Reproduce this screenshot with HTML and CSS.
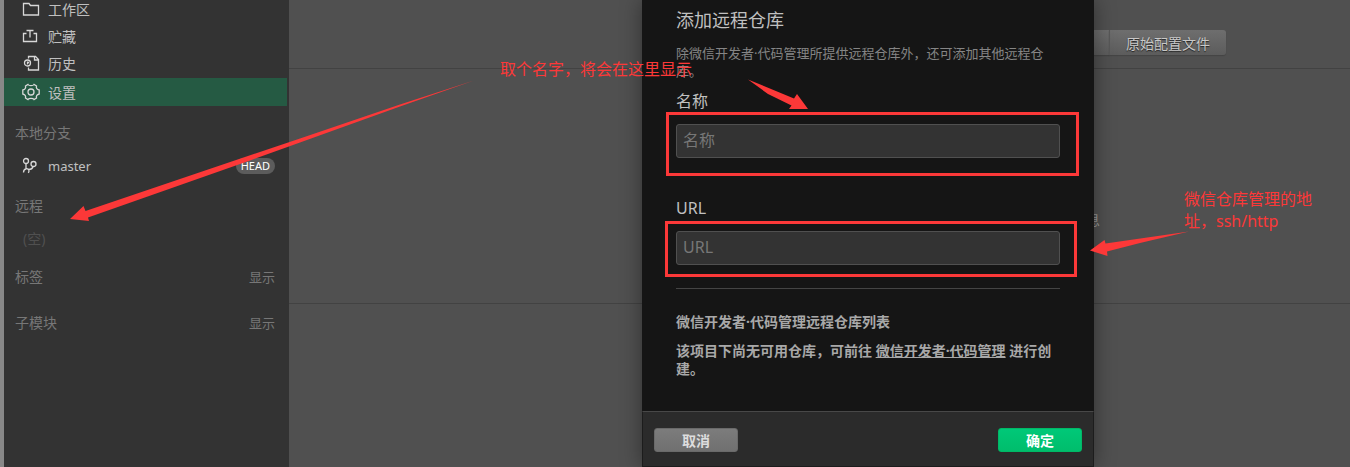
FILE: index.html
```html
<!DOCTYPE html>
<html lang="zh-CN">
<head>
    <meta charset="UTF-8">
    <meta name="viewport" content="width=device-width, initial-scale=1.0">
    <title>添加远程仓库</title>
    <link rel="stylesheet" href="styles.css">
</head>
<body>
    <div class="app">
        <aside class="sidebar">
            <nav class="menu">
                <a class="menu-item" href="#workspace">
                    <svg class="icon" viewBox="0 0 18 18"><path d="M1.500 3.500h5.500l1.500 2h8v9.500h-15z"/></svg>
                    工作区
                </a>
                <a class="menu-item" href="#stash">
                    <svg class="icon" viewBox="0 0 18 18"><path d="M4.500 6.500h-3v8h13v-8h-3M8 10.500V3.500M4.500 3.500h7"/></svg>
                    贮藏
                </a>
                <a class="menu-item" href="#history">
                    <svg class="icon" viewBox="0 0 18 18"><path d="M6.500 4.500v-2h7l3 3v10.500h-10v-2.500M12.500 2.500v3.500h4"/><circle cx="5.500" cy="9" r="3"/><path d="M5.500 7.500v2l1.500-1.500"/></svg>
                    历史
                </a>
                <a class="menu-item selected" href="#settings">
                    <svg class="icon" viewBox="0 0 18 18"><path d="M6 1.500c1 1.500 5 1.500 6 0l2.500 1.500c-.6 2 .6 3.500 2.700 4v4c-2.100.5-3.300 2-2.700 4L12 16.500c-1-1.500-5-1.500-6 0L3.500 15c.6-2-.6-3.500-2.700-4V7c2.100-.5 3.300-2 2.700-4z"/><circle cx="9" cy="9" r="3"/></svg>
                    设置
                </a>
            </nav>

            <section class="group">
                <h2 class="group-title">本地分支</h2>
                <a class="branch" href="#master">
                    <svg class="icon" viewBox="0 0 18 18"><circle cx="4" cy="4" r="2.500"/><circle cx="11.500" cy="7" r="2.500"/><path d="M4 6.500v5M11 9.500c-.5 2.500-2 3-4.500 3M1.500 15.500c0-4.500 5.500-5 5.500-1.500 0 1-.5 1.500-1 1.700"/></svg>
                    <span class="branch-name">master</span>
                    <span class="badge">HEAD</span>
                </a>
            </section>

            <section class="group">
                <h2 class="group-title">远程</h2>
                <p class="empty">(空)</p>
            </section>

            <section class="group folded">
                <h2 class="group-title">标签</h2>
                <button class="show" type="button">显示</button>
            </section>

            <section class="group folded">
                <h2 class="group-title">子模块</h2>
                <button class="show" type="button">显示</button>
            </section>
        </aside>

        <main class="main">
            <header class="toolbar">
                <button class="tab" type="button">当前设置</button>
                <button class="tab" type="button">原始配置文件</button>
            </header>
            <div class="panel">
                <p>无远程仓库信息</p>
            </div>
        </main>
    </div>

    <form class="dialog">
        <div class="dialog-body">
            <h1>添加远程仓库</h1>
            <p class="desc">除微信开发者·代码管理所提供远程仓库外，还可添加其他远程仓<br>库。</p>
            <div class="field">
                <label for="name">名称</label>
                <input id="name" type="text" placeholder="名称">
            </div>
            <div class="field">
                <label for="url">URL</label>
                <input id="url" type="text" placeholder="URL">
            </div>
            <div class="repos">
                <h3>微信开发者·代码管理远程仓库列表</h3>
                <p>该项目下尚无可用仓库，可前往 <a href="#code">微信开发者·代码管理</a> 进行创建。</p>
            </div>
        </div>
        <footer class="dialog-footer">
            <button class="btn" type="button">取消</button>
            <button class="btn primary" type="submit">确定</button>
        </footer>
    </form>

    <!-- red notes over the page -->
    <svg class="marks" width="1350" height="467" viewBox="0 0 1350 467">
        <rect x="667.500" y="113.500" width="410" height="61"/>
        <rect x="666.500" y="222.500" width="409" height="53"/>
        <path d="M474 80.500L400 104.500L300 138.500L85.500 211L83.500 206L70 219L89 221L88 217.500L250 160.500L300 142.500L400 106.500z"/>
        <path d="M748 79.500L794 98.500L797 94L808 109H789L791.500 105.500L768 94z"/>
        <path d="M1189 231.500L1105.500 243.500L1104.500 240L1090 250.500L1107.500 256L1107 251.500L1140 243z"/>
    </svg>
    <p class="note note-name">取个名字，将会在这里显示</p>
    <p class="note note-url">微信仓库管理的地址，ssh/http</p>
</body>
</html>
```
FILE: styles.css
```css
* {
    box-sizing: border-box;
}

body, html {
    margin: 0;
    height: 100%;
    overflow: hidden;
}

body {
    position: relative;
    background-color: #505050;
    color: #c0c0c0;
    font-family: "Noto Sans", "Noto Sans CJK SC", sans-serif;
    font-size: 14px;
}

h1, h2, h3, p {
    margin: 0;
    font-weight: normal;
}

a {
    color: inherit;
    text-decoration: none;
}

button, input {
    font-family: inherit;
}

.app {
    display: flex;
    height: 100%;
}

/* sidebar */
.sidebar {
    display: flex;
    flex-direction: column;
    flex: 0 0 289px;
    background-color: #333;
    border-left: 4px solid #888;
}

.menu {
    margin-top: -3px;
}

.menu-item {
    display: flex;
    align-items: center;
    gap: 8px;
    height: 27px;
    margin-right: 2px;
    padding: 0 0 4px 18px;
}

.menu-item.selected {
    height: 28px;
    padding-bottom: 0;
    background-color: #255a43;
}

.icon {
    flex: none;
    width: 18px;
    height: 18px;
    fill: none;
    stroke: #d8d8d8;
    stroke-width: 1.3;
}

.group {
    display: flex;
    flex-wrap: wrap;
    align-items: center;
    justify-content: space-between;
    gap: 5px;
    margin-top: 13px;
    padding: 0 14px 0 11px;
    line-height: 28px;
}

.group + .group {
    margin-top: 12px;
}

.group + .folded {
    margin-top: 10px;
}

.folded + .folded {
    margin-top: 18px;
}

.group-title {
    font-size: 14px;
    color: #777;
}

.branch {
    display: flex;
    align-items: center;
    flex: 1 0 100%;
    gap: 8px;
    padding-left: 7px;
}

.branch-name {
    flex: 1;
    font-size: 13px;
}

.badge {
    padding: 0 5px;
    border-radius: 8px;
    background-color: #5c5c5c;
    color: #fff;
    font-size: 11px;
    line-height: 16px;
}

.empty {
    flex: 1 0 100%;
    padding-left: 8px;
    color: #505050;
}

.show {
    padding: 0;
    border: none;
    background: none;
    color: #777;
    font-size: 13px;
    line-height: 26px;
}

/* settings page */
.main {
    flex: 1;
}

.toolbar {
    display: flex;
    justify-content: flex-end;
    height: 69px;
    padding: 30px 124px 0 0;
    border-bottom: 1px solid #424242;
}

.tab {
    height: 25px;
    padding: 0 16px;
    border: none;
    border-left: 1px solid #585858;
    background: linear-gradient(#6e6e6e, #5c5c5c);
    box-shadow: 0 1px 1px #444;
    color: #c8c8c8;
    font-size: 14px;
    text-shadow: 0 1px 1px #222;
}

.tab:last-child {
    border-radius: 0 3px 3px 0;
}

.panel {
    display: flex;
    align-items: center;
    justify-content: flex-end;
    height: 235px;
    padding: 66px 250px 0 0;
    border-bottom: 1px solid #424242;
    color: #999;
}

/* dialog */
.dialog {
    position: absolute;
    top: 0;
    bottom: 0;
    left: 642px;
    display: flex;
    flex-direction: column;
    width: 452px;
    background-color: #151515;
    box-shadow: 0 0 20px rgba(0, 0, 0, 0.4);
}

.dialog-body {
    flex: 1;
    padding: 8px 34px 0;
}

.dialog h1 {
    font-size: 18px;
    line-height: 24px;
}

.desc {
    margin-top: 12px;
    color: #858585;
    font-size: 13px;
    line-height: 18px;
}

.field {
    margin-top: 7px;
}

.field + .field {
    margin-top: 36px;
}

.field label {
    display: block;
    margin-bottom: 9px;
    font-size: 16px;
    line-height: 28px;
}

.field input {
    display: block;
    width: 100%;
    height: 34px;
    padding: 0 6px 2px;
    border: 1px solid #505050;
    border-radius: 3px;
    background-color: #333;
    color: #c8c8c8;
    font-size: 16px;
}

.field input::placeholder {
    color: #777;
}

.repos {
    margin-top: 23px;
    padding-top: 24px;
    border-top: 1px solid #444;
    color: #a8a8a8;
    line-height: 18px;
}

.repos h3 {
    margin-bottom: 11px;
    font-size: 14px;
    font-weight: bold;
}

.repos p {
    font-weight: bold;
}

.repos a {
    text-decoration: underline;
}

.dialog-footer {
    display: flex;
    justify-content: space-between;
    height: 56px;
    padding: 16px 11px;
    border: 1px solid #1c1c1c;
    border-top-color: #484848;
    background-color: #2b2b2b;
}

.btn {
    width: 84px;
    height: 24px;
    padding: 0;
    border: 1px solid #6a6a6a;
    border-radius: 3px;
    background: linear-gradient(#7c7c7c, #707070);
    color: #ddd;
    font-size: 14px;
    font-weight: bold;
}

.btn.primary {
    border-color: #00b866;
    background: linear-gradient(#00c878, #00bd6c);
    color: #fff;
}

/* notes */
.marks {
    position: absolute;
    top: 0;
    left: 0;
    pointer-events: none;
}

.marks rect {
    fill: none;
    stroke: #fc3838;
    stroke-width: 3;
}

.marks path {
    fill: #fc3838;
}

.note {
    position: absolute;
    color: #fc3838;
    font-size: 16px;
    line-height: 22px;
}

.note-name {
    top: 58px;
    left: 500px;
}

.note-url {
    top: 188px;
    left: 1184px;
    width: 132px;
}
```
